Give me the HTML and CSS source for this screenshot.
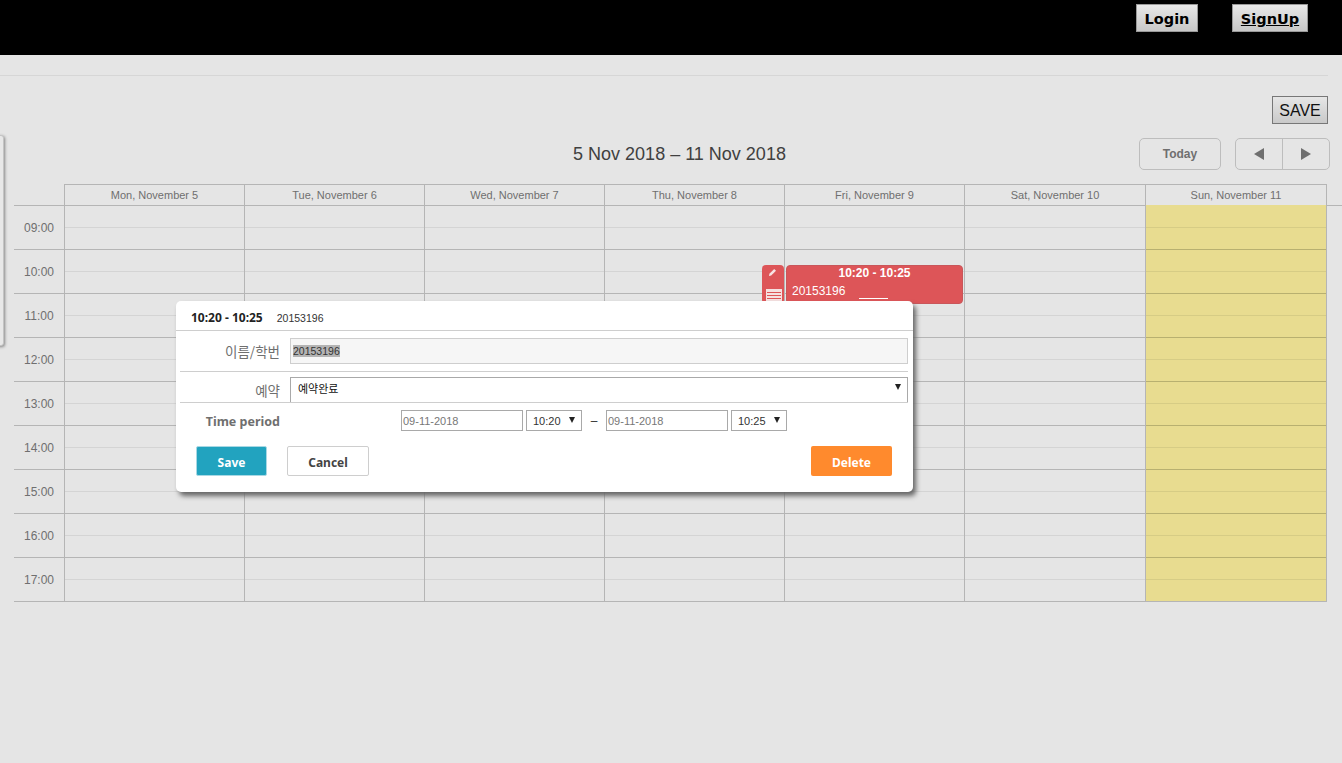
FILE: index.html
```html
<html>
<head>
    <meta content="text/html;charset=utf-8" http-equiv="Content-Type"/>
    <title>Calendar</title>
    <link rel="stylesheet" href="styles.css">
</head>
<body>
<div class="topbar">
    <a class="topbtn login">Login</a>
    <a class="topbtn signup">SignUp</a>
</div>
<div class="rule"></div>
<div class="saverow"><button class="savebtn">SAVE</button></div>

<div class="toolbar">
    <div class="daterange">5 Nov 2018 &ndash; 11 Nov 2018</div>
    <div class="tbbtn today">Today</div>
    <div class="tbbtn nav">
        <div class="navpart navleft"><span class="arrow-l"></span></div>
        <div class="navpart"><span class="arrow-r"></span></div>
    </div>
</div>

<div class="sidepanel"></div>

<div class="calendar">
    <div class="row headrow">
        <div class="timecell"></div>
        <div class="day">Mon, November 5</div>
        <div class="day">Tue, November 6</div>
        <div class="day">Wed, November 7</div>
        <div class="day">Thu, November 8</div>
        <div class="day">Fri, November 9</div>
        <div class="day">Sat, November 10</div>
        <div class="day">Sun, November 11</div>
    </div>
    <div class="row"><div class="timecell">09:00</div><div class="cell"></div><div class="cell"></div><div class="cell"></div><div class="cell"></div><div class="cell"></div><div class="cell"></div><div class="cell now"></div></div>
    <div class="row"><div class="timecell">10:00</div><div class="cell"></div><div class="cell"></div><div class="cell"></div><div class="cell"></div><div class="cell"></div><div class="cell"></div><div class="cell now"></div></div>
    <div class="row"><div class="timecell">11:00</div><div class="cell"></div><div class="cell"></div><div class="cell"></div><div class="cell"></div><div class="cell"></div><div class="cell"></div><div class="cell now"></div></div>
    <div class="row"><div class="timecell">12:00</div><div class="cell"></div><div class="cell"></div><div class="cell"></div><div class="cell"></div><div class="cell"></div><div class="cell"></div><div class="cell now"></div></div>
    <div class="row"><div class="timecell">13:00</div><div class="cell"></div><div class="cell"></div><div class="cell"></div><div class="cell"></div><div class="cell"></div><div class="cell"></div><div class="cell now"></div></div>
    <div class="row"><div class="timecell">14:00</div><div class="cell"></div><div class="cell"></div><div class="cell"></div><div class="cell"></div><div class="cell"></div><div class="cell"></div><div class="cell now"></div></div>
    <div class="row"><div class="timecell">15:00</div><div class="cell"></div><div class="cell"></div><div class="cell"></div><div class="cell"></div><div class="cell"></div><div class="cell"></div><div class="cell now"></div></div>
    <div class="row"><div class="timecell">16:00</div><div class="cell"></div><div class="cell"></div><div class="cell"></div><div class="cell"></div><div class="cell"></div><div class="cell"></div><div class="cell now"></div></div>
    <div class="row lastrow"><div class="timecell">17:00</div><div class="cell"></div><div class="cell"></div><div class="cell"></div><div class="cell"></div><div class="cell"></div><div class="cell"></div><div class="cell now"></div></div>

    <!-- the booked event, sits over the grid -->
    <div class="evhandle">
        <svg class="evpencil" width="10" height="10" viewBox="0 0 10 10"><path d="M1 9 L1.4 6.8 L6.2 2 L8 3.8 L3.2 8.6 Z" fill="#f7e4e4"/></svg>
        <div class="evlist"><i></i><i></i><i></i><i></i></div>
    </div>
    <div class="evbody">
        <div class="evtime">10:20 - 10:25</div>
        <div class="evtext">20153196<span class="evline"></span></div>
    </div>
</div>

<div class="dialog">
    <div class="dlgtitle"><b>10:20 - 10:25</b><span>20153196</span></div>
    <div class="dlgrow namerow">
        <label>이름/학번</label>
        <div class="field readonly"><span class="selected">20153196</span></div>
    </div>
    <div class="dlgrow statusrow">
        <label>예약</label>
        <div class="field pick">예약완료<span class="caret"></span></div>
    </div>
    <div class="dlgrow timerow">
        <label>Time period</label>
        <div class="timeinputs">
            <div class="dateinp">09-11-2018</div>
            <div class="timeinp">10:20<span class="caret"></span></div>
            <span class="dash">&ndash;</span>
            <div class="dateinp">09-11-2018</div>
            <div class="timeinp">10:25<span class="caret"></span></div>
        </div>
    </div>
    <div class="dlgbtns">
        <div class="btn btnsave">Save</div>
        <div class="btn btncancel">Cancel</div>
        <div class="btn btndelete">Delete</div>
    </div>
</div>
</body>
</html>
```
FILE: styles.css
```css
body {
    margin: 0;
    background: #e5e5e5;
    font-family: "Liberation Sans", Arial, sans-serif;
    color: #333;
    overflow: hidden;
}

/* top bar */
.topbar {
    height: 55px;
    background: #000;
    display: flex;
    justify-content: flex-end;
    align-items: flex-start;
    gap: 34px;
    padding-right: 34px;
    box-sizing: border-box;
    padding-top: 4px;
}
.topbtn {
    height: 28px;
    box-sizing: border-box;
    border: 1px solid #999;
    background: linear-gradient(#e8e8e8, #c8c8c8);
    color: #000;
    font-family: "DejaVu Sans", Verdana, sans-serif;
    font-weight: bold;
    font-size: 14.5px;
    line-height: 28px;
    text-align: center;
}
.login { width: 62px; }
.signup { width: 76px; text-decoration: underline; }

.rule {
    margin-top: 20px;
    width: 1328px;
    border-top: 1px solid #d6d6d6;
}
.saverow {
    display: flex;
    justify-content: flex-end;
    padding-right: 14px;
    margin-top: 20px;
}
.savebtn {
    width: 56px;
    height: 28px;
    padding: 1px 0 0;
    border: 1px solid #777;
    background: linear-gradient(#e6e6e6, #c9c9c9);
    font-family: "Liberation Sans", Arial, sans-serif;
    font-size: 16px;
    color: #111;
}

/* toolbar above the grid */
.toolbar {
    display: flex;
    align-items: center;
    margin-top: 14px;
    height: 32px;
    padding-right: 12px;
}
.daterange {
    flex: 1;
    padding-left: 220px;
    text-align: center;
    font-size: 18px;
    color: #404040;
}
.tbbtn {
    height: 32px;
    box-sizing: border-box;
    border: 1px solid #bdbdbd;
    border-radius: 5px;
    color: #6f6f6f;
}
.today {
    width: 82px;
    text-align: center;
    font-weight: bold;
    font-size: 12px;
    line-height: 30px;
    margin-right: 14px;
}
.nav { width: 95px; display: flex; }
.navpart {
    flex: 1;
    display: flex;
    align-items: center;
    justify-content: center;
}
.navleft { border-right: 1px solid #bdbdbd; }
.arrow-l {
    border-top: 6px solid transparent;
    border-bottom: 6px solid transparent;
    border-right: 10px solid #6f6f6f;
}
.arrow-r {
    border-top: 6px solid transparent;
    border-bottom: 6px solid transparent;
    border-left: 10px solid #6f6f6f;
}

.sidepanel {
    position: absolute;
    left: -6px;
    top: 135px;
    width: 8px;
    height: 209px;
    border: 1px solid #c4c4c4;
    border-radius: 3px;
    background: #e8e8e8;
    box-shadow: 1px 1px 3px #888;
}

/* calendar grid */
.calendar {
    position: relative;
    margin: 14px 0 0 14px;
}
.row {
    display: grid;
    grid-template-columns: 50px repeat(5, 180px) 181px 182px;
    width: 1313px;
    height: 44px;
    box-sizing: border-box;
    border-top: 1px solid #b5b5b5;
}
.headrow {
    height: 21px;
    border-top: 0;
}
.timecell {
    font-size: 12px;
    line-height: 42px;
    padding-top: 1px;
    color: #6f6f6f;
    text-align: center;
}
.day {
    height: 21px;
    box-sizing: border-box;
    border-top: 1px solid #b5b5b5;
    border-left: 1px solid #b5b5b5;
    font-size: 11px;
    line-height: 21px;
    text-align: center;
    color: #6f6f6f;
}
.day:last-child { border-right: 1px solid #b5b5b5; }
.cell {
    border-left: 1px solid #b5b5b5;
    background: linear-gradient(transparent 21px, #d4d4d4 21px, #d4d4d4 22px, transparent 22px);
}
.cell:last-child { border-right: 1px solid #b5b5b5; }
/* today column: hour line is drawn in the cell so it comes out olive on yellow */
.now {
    margin-top: -1px;
    background: linear-gradient(#b8b070 1px, #e8dc90 1px, #e8dc90 22px, #d6cc85 22px, #d6cc85 23px, #e8dc90 23px);
}
.row:nth-child(2) { width: 1328px; }
.row:nth-child(2) .now { background: linear-gradient(#e8dc90 22px, #d6cc85 22px, #d6cc85 23px, #e8dc90 23px); }
.lastrow { height: 45px; border-bottom: 1px solid #b5b5b5; }

/* event */
.evhandle {
    position: absolute;
    left: 748px;
    top: 81px;
    width: 22px;
    height: 39px;
    background: #dd5558;
    border-radius: 4px;
    overflow: hidden;
}
.evpencil { display: block; margin: 2px 0 0 6px; }
.evlist {
    margin: 12px 0 0 4px;
    width: 16px;
    height: 16px;
    padding: 3px 1px 0;
    box-sizing: border-box;
    background: #f5e0e0;
}
.evlist i {
    display: block;
    height: 1px;
    margin-bottom: 2px;
    background: #dd5558;
}
.evbody {
    position: absolute;
    left: 772px;
    top: 81px;
    width: 177px;
    height: 39px;
    box-sizing: border-box;
    background: #dd5558;
    border: 1px solid #c9565a;
    border-radius: 4px;
    color: #fff;
    font-size: 12px;
}
.evtime {
    text-align: center;
    font-weight: bold;
    line-height: 14px;
}
.evtext {
    padding-left: 5px;
    line-height: 16px;
    margin-top: 3px;
}
.evline {
    display: inline-block;
    width: 29px;
    height: 1px;
    background: #fff;
    margin-left: 14px;
    vertical-align: -4px;
}

/* lightbox */
.dialog {
    position: absolute;
    left: 176px;
    top: 301px;
    width: 737px;
    height: 191px;
    box-sizing: border-box;
    background: #fff;
    border-radius: 5px;
    box-shadow: 3px 4px 5px #666;
    font-size: 12px;
}
.dlgtitle {
    height: 30px;
    box-sizing: border-box;
    border-bottom: 1px solid #cecece;
    padding-left: 15px;
    line-height: 34px;
    font-size: 10.5px;
    color: #333;
}
.dlgtitle b {
    font-family: "Noto Sans", sans-serif;
    font-size: 12px;
    color: #222;
    margin-right: 14px;
}
.dlgrow {
    display: flex;
    margin-left: 4px;
    margin-right: 5px;
}
.dlgrow label {
    width: 100px;
    margin-right: 10px;
    flex: none;
    text-align: right;
    color: #6f6f6f;
    font-family: "Noto Sans CJK KR", sans-serif;
    font-size: 13.5px;
}
.namerow {
    height: 41px;
    padding-top: 7px;
    box-sizing: border-box;
    border-bottom: 1px solid #cecece;
}
.namerow label { line-height: 26px; }
.field {
    flex: 1;
    box-sizing: border-box;
    font-size: 10.5px;
}
.readonly {
    height: 26px;
    border: 1px solid #cecece;
    background: #f6f6f6;
    padding-left: 2px;
    line-height: 24px;
    color: #333;
}
.selected { background: #b4b4b4; }
.statusrow {
    height: 31px;
    padding-top: 5px;
    box-sizing: border-box;
    border-bottom: 1px solid #cecece;
}
.statusrow label { line-height: 26px; }
.pick {
    position: relative;
    height: 25px;
    border: 1px solid #a9a9a9;
    border-bottom: 0;
    padding-left: 7px;
    line-height: 20px;
    color: #111;
    font-family: "Noto Sans CJK KR", sans-serif;
    font-size: 11px;
}
.caret {
    position: absolute;
    top: 6px;
    right: 6px;
    border-left: 3px solid transparent;
    border-right: 3px solid transparent;
    border-top: 6px solid #222;
}
.timerow { height: 43px; align-items: flex-start; padding-top: 7px; box-sizing: border-box; }
.timerow label {
    font-family: "Noto Sans", sans-serif;
    font-weight: bold;
    font-size: 12.5px;
    line-height: 24px;
}
.timeinputs {
    display: flex;
    align-items: center;
    margin-left: 111px;
}
.dateinp {
    width: 122px;
    height: 21px;
    box-sizing: border-box;
    border: 1px solid #a9a9a9;
    color: #777;
    font-size: 11px;
    line-height: 20px;
    padding-left: 1px;
}
.timeinp {
    position: relative;
    width: 56px;
    height: 21px;
    box-sizing: border-box;
    margin-left: 3px;
    border: 1px solid #a9a9a9;
    color: #333;
    font-size: 11px;
    line-height: 20px;
    padding-left: 6px;
}
.dash { width: 24px; text-align: center; color: #333; }
.dlgbtns {
    display: flex;
    padding-left: 20px;
    padding-right: 21px;
}
.btn {
    height: 30px;
    box-sizing: border-box;
    border-radius: 2px;
    text-align: center;
    font-family: "Noto Sans", sans-serif;
    font-weight: bold;
    font-size: 12px;
    line-height: 33px;
}
.btnsave { width: 71px; background: #22a3bf; color: #fff; border: 1px solid #a8d8e4; line-height: 31px; }
.btncancel { width: 82px; margin-left: 20px; background: #fff; color: #444; border: 1px solid #cecece; line-height: 31px; }
.btndelete { width: 81px; margin-left: auto; background: #ff8a2d; color: #fff; }
```
